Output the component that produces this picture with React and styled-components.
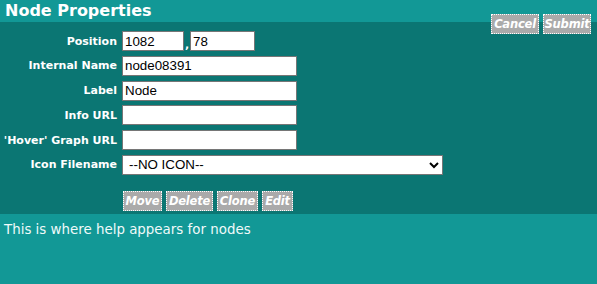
import React from "react";
import styled, { createGlobalStyle } from "styled-components";

const GlobalStyle = createGlobalStyle`
  html, body {
    margin: 0;
    padding: 0;
    background: #129896;
    font-family: "DejaVu Sans", Verdana, sans-serif;
  }
`;

const Panel = styled.div`
  position: relative;
  width: 597px;
  height: 284px;
  display: flex;
  flex-direction: column;
  background: #129896;
`;

const TitleBar = styled.h1`
  margin: 0;
  height: 22px;
  padding: 0 0 0 5px;
  font-size: 16px;
  font-weight: bold;
  line-height: 21px;
  color: #ffffff;
  background: #129896;
`;

const Body = styled.div`
  background: #0b7673;
  padding: 9px 0 3px 0;
  display: flex;
  flex-direction: column;
`;

const ActionBar = styled.div`
  position: absolute;
  top: 14px;
  right: 6px;
  display: flex;
  gap: 4px;
`;

const Form = styled.div`
  display: grid;
  grid-template-columns: 117px auto;
  column-gap: 5px;
  row-gap: 4.8px;
  align-items: center;
`;

const Label = styled.label`
  justify-self: end;
  font-size: 11px;
  font-weight: bold;
  color: #ffffff;
  white-space: nowrap;
`;

const Field = styled.div`
  display: flex;
  align-items: center;
  height: 20px;
`;

const Comma = styled.span`
  font-size: 11px;
  font-weight: bold;
  color: #ffffff;
  width: 6px;
  text-align: center;
  align-self: flex-end;
`;

const TextInput = styled.input`
  box-sizing: border-box;
  width: ${(p) => p.$w}px;
  height: 20px;
  margin: 0;
  padding: 1px 2px;
  border: 1px solid #767676;
  background: #ffffff;
  font-family: "Liberation Sans", Arial, sans-serif;
  font-size: 13.33px;
  color: #000;
  outline: none;
`;

const Select = styled.select`
  box-sizing: border-box;
  width: 321px;
  height: 20px;
  margin: 0;
  padding: 0 2px;
  border: 1px solid #767676;
  background: #ffffff;
  font-family: "Liberation Sans", Arial, sans-serif;
  font-size: 13.33px;
  color: #000;
`;

const ToolRow = styled.div`
  display: flex;
  gap: 4px;
  margin: 16px 0 0 123px;
`;

const Btn = styled.button`
  box-sizing: border-box;
  height: 20px;
  width: ${(p) => p.$w}px;
  margin: 0;
  padding: 0;
  border: 1px dotted #ffffff;
  background: #aaaaaa;
  color: #ffffff;
  font-family: "DejaVu Sans", Verdana, sans-serif;
  font-size: 11.5px;
  font-weight: bold;
  font-style: italic;
  letter-spacing: -0.2px;
  white-space: nowrap;
  overflow: hidden;
  cursor: pointer;
`;

const Help = styled.div`
  flex: 1;
  padding: 8px 4px;
  font-size: 13.4px;
  color: #f0fafa;
`;

export default function App() {
  return (
    <>
      <GlobalStyle />
      <Panel>
        <TitleBar>Node Properties</TitleBar>
        <ActionBar>
          <Btn $w={48}>Cancel</Btn>
          <Btn $w={48}>Submit</Btn>
        </ActionBar>
        <Body>
          <Form>
            <Label>Position</Label>
            <Field>
              <TextInput $w={62} defaultValue="1082" />
              <Comma>,</Comma>
              <TextInput $w={65} defaultValue="78" />
            </Field>
            <Label>Internal Name</Label>
            <Field>
              <TextInput $w={175} defaultValue="node08391" />
            </Field>
            <Label>Label</Label>
            <Field>
              <TextInput $w={175} defaultValue="Node" />
            </Field>
            <Label>Info URL</Label>
            <Field>
              <TextInput $w={175} defaultValue="" />
            </Field>
            <Label>'Hover' Graph URL</Label>
            <Field>
              <TextInput $w={175} defaultValue="" />
            </Field>
            <Label>Icon Filename</Label>
            <Field>
              <Select defaultValue="none">
                <option value="none">--NO ICON--</option>
              </Select>
            </Field>
          </Form>
          <ToolRow>
            <Btn $w={39}>Move</Btn>
            <Btn $w={47}>Delete</Btn>
            <Btn $w={41}>Clone</Btn>
            <Btn $w={31}>Edit</Btn>
          </ToolRow>
        </Body>
        <Help>This is where help appears for nodes</Help>
      </Panel>
    </>
  );
}
